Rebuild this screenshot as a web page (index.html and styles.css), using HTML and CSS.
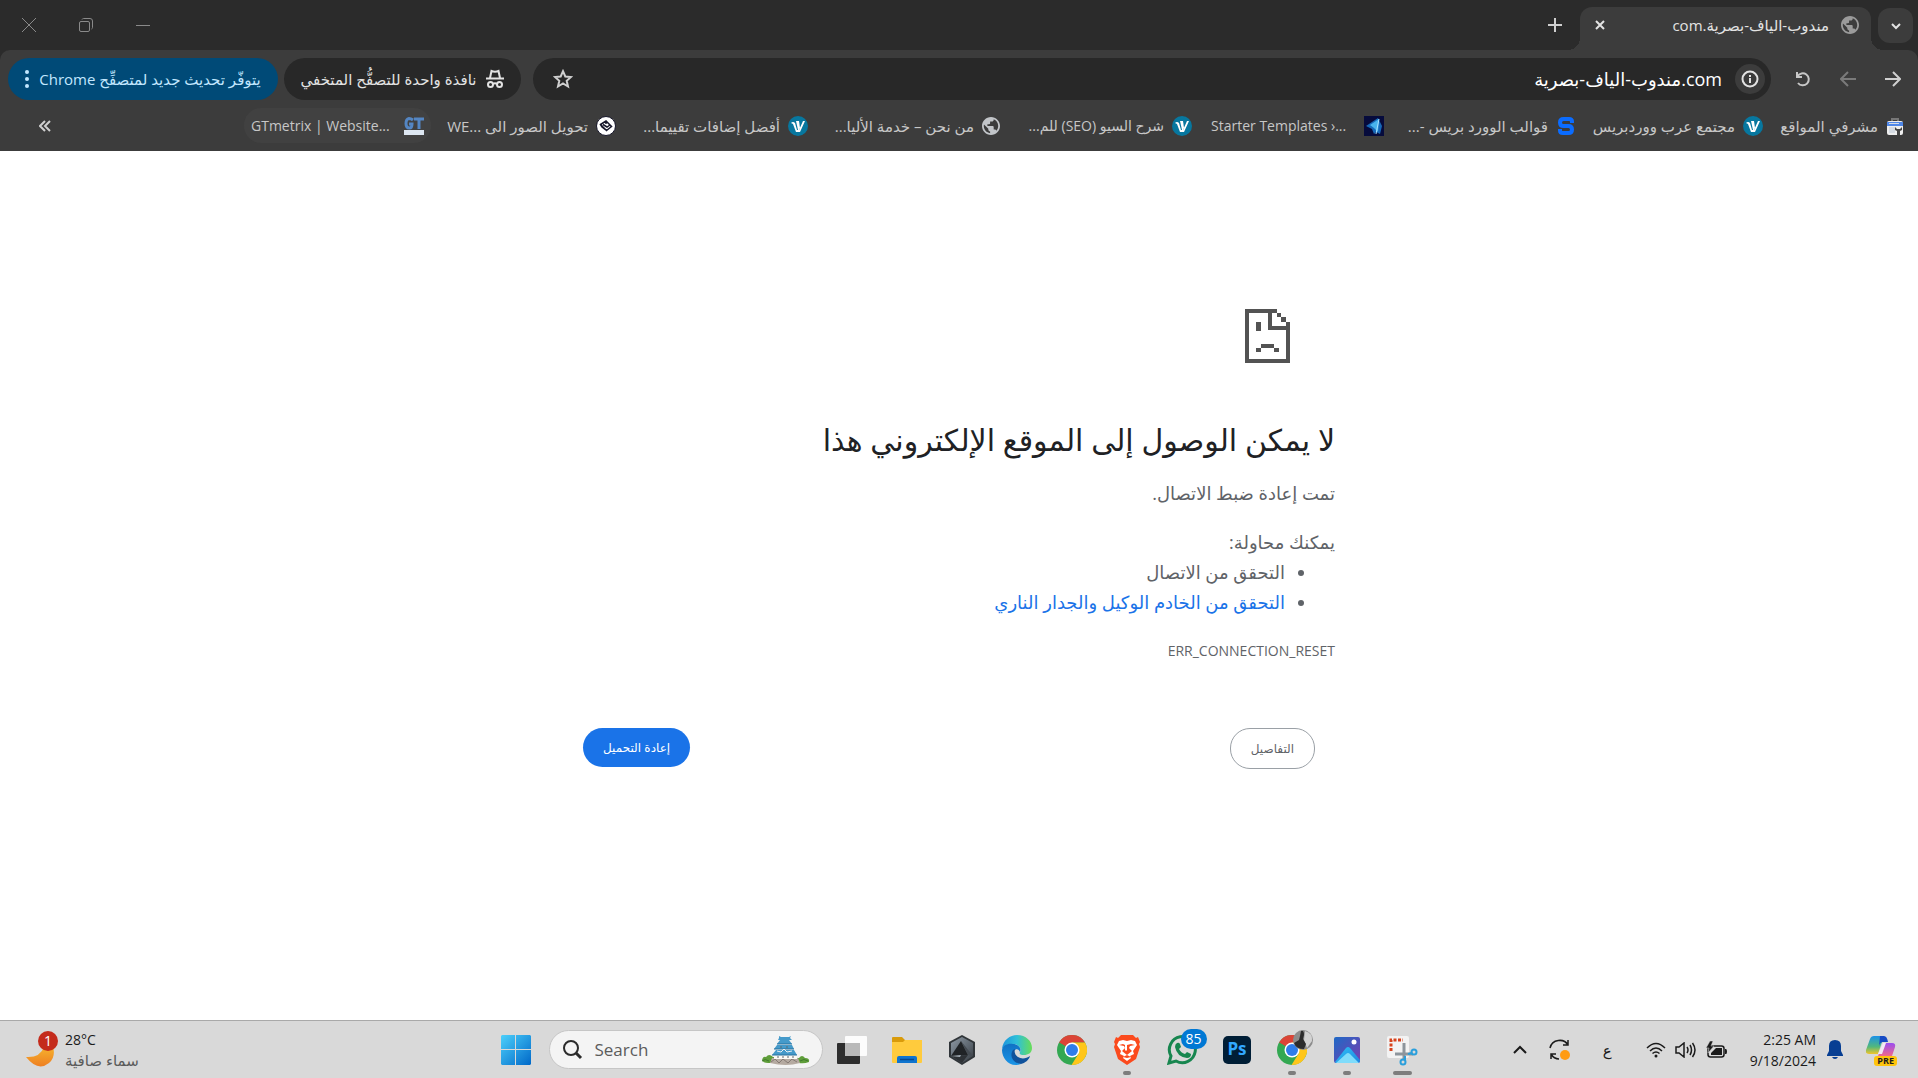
FILE: index.html
```html
<!DOCTYPE html>
<html lang="ar" dir="rtl">
<head>
    <meta charset="utf-8">
    <title>مندوب-الياف-بصرية.com</title>
    <link rel="stylesheet" href="styles.css">
</head>
<body>
    <svg class="defs" width="0" height="0" aria-hidden="true">
        <defs>
            <symbol id="globe" viewBox="2 2 20 20">
                <path fill="currentColor" d="M12 2C6.480 2 2 6.480 2 12s4.480 10 10 10 10-4.480 10-10S17.520 2 12 2zm-1 17.930c-3.950-.490-7-3.850-7-7.930 0-.620.080-1.210.210-1.790L9 15v1c0 1.100.900 2 2 2v1.930zm6.900-2.540c-.260-.810-1-1.390-1.900-1.390h-1v-3c0-.550-.450-1-1-1H8v-2h2c.550 0 1-.450 1-1V7h2c1.100 0 2-.900 2-2v-.410c2.930 1.190 5 4.060 5 7.410 0 2.080-.800 3.970-2.100 5.390z"/>
            </symbol>
            <symbol id="arabwp" viewBox="0 0 20 20">
                <circle cx="10" cy="10" r="10" fill="#07779f"/>
                <path d="M3 7q2-2 4 0l2 7h2l4-9h2l-5 11H8L5 8z" fill="#fff"/>
                <path d="M8 5h3l1 7-1 2h-1z" fill="#fff"/>
            </symbol>
            <symbol id="chrome" viewBox="0 0 30 30">
                <circle cx="15" cy="15" r="15" fill="#33a852"/>
                <path d="M15 15L2 7.500A15 15 0 0 1 28 7.500H15z" fill="#db4437"/>
                <path d="M15 7.500H28A15 15 0 0 1 14.500 30L21.500 18.700z" fill="#ffc61a"/>
                <path d="M2 7.500L8.500 18.700 15 15z" fill="#33a852"/>
                <circle cx="15" cy="15" r="7.500" fill="#fff"/>
                <circle cx="15" cy="15" r="6" fill="#2f7de9"/>
            </symbol>
        </defs>
    </svg>

    <header class="browser">
        <div class="tabstrip">
            <button class="tab-search" aria-label="البحث في علامات التبويب">
                <svg width="12" height="12" viewBox="0 0 12 12" fill="none" stroke="#e3e3e3" stroke-width="2"><path d="M2 4l4 4 4-4"/></svg>
            </button>
            <div class="tab">
                <svg class="tab-icon" width="18" height="18"><use href="#globe"/></svg>
                <span class="tab-title">مندوب-الياف-بصرية.com</span>
                <button class="tab-close" aria-label="إغلاق">
                    <svg width="12" height="12" viewBox="0 0 12 12" stroke="#e3e3e3" stroke-width="2"><path d="M2 2l8 8M10 2l-8 8"/></svg>
                </button>
            </div>
            <button class="new-tab" aria-label="علامة تبويب جديدة">
                <svg width="14" height="14" viewBox="0 0 14 14" stroke="#d0d0d0" stroke-width="2"><path d="M7 0v14M0 7h14"/></svg>
            </button>
            <div class="window-buttons">
                <button aria-label="تصغير"><svg width="14" height="14" viewBox="0 0 14 14" stroke="#8a8a8a"><path d="M0 7.500h14"/></svg></button>
                <button aria-label="استعادة"><svg width="14" height="14" viewBox="0 0 14 14" fill="none" stroke="#8a8a8a"><rect x=".5" y="3.500" width="10" height="10" rx="1.500"/><path d="M3 1.500q.5-1 1.500-1H11q2.500 0 2.500 2.500v6.500q0 1-1 1.500"/></svg></button>
                <button aria-label="إغلاق النافذة"><svg width="14" height="14" viewBox="0 0 14 14" stroke="#8a8a8a"><path d="M0 0l14 14M14 0L0 14"/></svg></button>
            </div>
        </div>

        <div class="toolbar">
            <nav class="nav-buttons">
                <button aria-label="رجوع"><svg width="16" height="16" viewBox="0 0 16 16" fill="none" stroke="#d0d0d0" stroke-width="2"><path d="M0 8h14M8 1l7 7-7 7"/></svg></button>
                <button aria-label="تقدم"><svg width="16" height="16" viewBox="0 0 16 16" fill="none" stroke="#7a7a7a" stroke-width="2"><path d="M16 8H2M8 1L1 8l7 7"/></svg></button>
                <button aria-label="إعادة التحميل"><svg width="18" height="18" viewBox="0 0 18 18" fill="none" stroke="#c7c7c7" stroke-width="2"><path d="M3 2v5h5M3.500 6.500A6 6 0 1 1 4 13"/></svg></button>
            </nav>
            <div class="omnibox">
                <button class="site-info" aria-label="معلومات الموقع">
                    <svg width="18" height="18" viewBox="0 0 18 18" fill="none" stroke="#e3e3e3" stroke-width="2"><circle cx="9" cy="9" r="7.500"/><path d="M9 8v5M9 5v2"/></svg>
                </button>
                <input class="url" type="text" aria-label="شريط العناوين" value="com.مندوب-الياف-بصرية">
                <button class="star" aria-label="إضافة إشارة">
                    <svg width="20" height="20" viewBox="0 0 20 20" fill="none" stroke="#d0d0d0" stroke-width="2"><path d="M10 2.200l2.300 5.300 5.700.5-4.300 3.800 1.300 5.700-5-3-5 3 1.300-5.700L2 8l5.700-.5z"/></svg>
                </button>
            </div>
            <button class="pill incognito">
                <svg width="18" height="20" viewBox="0 0 18 20" fill="none" stroke="#e3e3e3" stroke-width="2"><path d="M0 9.500h18M4 9l1.500-7q3.500 1.500 7 0L14 9M7 15q2-1.500 4 0"/><circle cx="4.500" cy="15.500" r="2.500"/><circle cx="13.500" cy="15.500" r="2.500"/></svg>
                <span>نافذة واحدة للتصفُّح المتخفي</span>
            </button>
            <button class="pill update">
                <span>يتوفّر تحديث جديد لمتصفِّح Chrome</span>
                <svg width="4" height="18" viewBox="0 0 4 18" fill="#c2e7ff"><circle cx="2" cy="2" r="2"/><circle cx="2" cy="9" r="2"/><circle cx="2" cy="16" r="2"/></svg>
            </button>
        </div>

        <nav class="bookmarks">
            <a class="bookmark short" href="#">
                <svg width="18" height="18" viewBox="0 0 18 18"><path d="M6 4V2h6v2" fill="none" stroke="#777" stroke-width="2"/><rect x="1" y="4" width="16" height="14" rx="2" fill="#eee"/><path d="M1 5h16v4H1z" fill="#4f87e8"/><path d="M3 6h10v1H3zM3 10h6v6H3z" fill="#d5dbe3"/><path d="M9 10v3l2 1v4h3v-4l2-1v-3l-2 2h-3z" fill="#444"/></svg>
                <span>مشرفي المواقع</span>
            </a>
            <a class="bookmark medium" href="#"><svg width="20" height="20"><use href="#arabwp"/></svg><span>مجتمع عرب ووردبريس</span></a>
            <a class="bookmark" href="#">
                <svg width="20" height="20" viewBox="0 0 20 20" fill="none" stroke="#0b6cff" stroke-width="4"><path d="M16 7V5.500Q16 3 13 3H7.500Q4 3 4 6.500T7.500 10h5q3.500 0 3.500 3.500T12.500 17H7q-3 0-3-2.500V13"/></svg>
                <span>قوالب الوورد بريس -...</span>
            </a>
            <a class="bookmark latin" href="#">
                <svg width="20" height="20" viewBox="0 0 20 20"><rect width="20" height="20" fill="#060b3c"/><path d="M2 10L14 2l4 8-2 8-4-2-2 2-2-5z" fill="#1668b8"/><path d="M6 9l9-6-1 13-4-4z" fill="#48b4ee"/><path d="M15 3l-3 15" stroke="#a8e0ff"/></svg>
                <span dir="ltr">Starter Templates ›...</span>
            </a>
            <a class="bookmark latin" href="#"><svg width="20" height="20"><use href="#arabwp"/></svg><span>شرح السيو (SEO) للم...</span></a>
            <a class="bookmark" href="#"><svg class="grey" width="18" height="18"><use href="#globe"/></svg><span>من نحن – خدمة الأليا...</span></a>
            <a class="bookmark" href="#"><svg width="20" height="20"><use href="#arabwp"/></svg><span>أفضل إضافات تقييما...</span></a>
            <a class="bookmark" href="#">
                <svg width="20" height="20" viewBox="0 0 20 20"><circle cx="10" cy="10" r="9.500" fill="#fff" stroke="#17172b"/><path d="M4.500 8.500L10 5l5.500 5.500-5 4zM4.500 8.500L6 11l4.500 3.500M7 8.500l4 2.500 3-2M10 5v3" fill="none" stroke="#17172b" stroke-width="1.500"/></svg>
                <span>تحويل الصور الى <bdi dir="ltr">WE...</bdi></span>
            </a>
            <a class="bookmark latin hovered" href="#">
                <svg width="20" height="18" viewBox="0 0 20 18"><g fill="none" stroke="#5486c3" stroke-width="3"><path d="M9 3Q7 1.500 5 1.500 2 2 2 6.500T5.500 11Q8 11 8 7H5M10 2h10M15 2v10"/></g><path d="M0 13h20v5H0z" fill="#dde6f1"/></svg>
                <span dir="ltr">GTmetrix | Website...</span>
            </a>
            <button class="more-bookmarks" aria-label="مزيد من الإشارات">
                <svg width="12" height="12" viewBox="0 0 12 12" fill="none" stroke="#d0d0d0" stroke-width="2"><path d="M6 1L1 6l5 5M11 1L6 6l5 5"/></svg>
            </button>
        </nav>
    </header>

    <main class="page">
        <div class="error">
            <svg class="sad" width="45" height="54" viewBox="0 0 45 54" fill="#535353" shape-rendering="crispEdges">
                <path d="M0 0h32v4h4v4h5v5h4v41H0zM4 4v46h37V21H23V4zM27 4v13h14v-4h-5V8h-4V4z" fill-rule="evenodd"/>
                <path d="M11 13h5v9h-5zM16 35h13v4H16zM11 39h5v4h-5zM29 39h5v4h-5z"/>
            </svg>
            <h1>لا يمكن الوصول إلى الموقع الإلكتروني هذا</h1>
            <p>تمت إعادة ضبط الاتصال.</p>
            <div class="suggestions">
                <p>يمكنك محاولة:</p>
                <ul>
                    <li>التحقق من الاتصال</li>
                    <li><a href="#">التحقق من الخادم الوكيل والجدار الناري</a></li>
                </ul>
            </div>
            <div class="error-code">ERR_CONNECTION_RESET</div>
            <div class="buttons">
                <button class="details">التفاصيل</button>
                <button class="reload">إعادة التحميل</button>
            </div>
        </div>
    </main>

    <footer class="taskbar" dir="ltr">
        <button class="weather">
            <svg width="34" height="38" viewBox="0 0 34 38">
                <defs><linearGradient id="moon" x2="0" y2="1"><stop stop-color="#f6b52e"/><stop offset="1" stop-color="#ee7f22"/></linearGradient></defs>
                <path d="M0 26q14 1 18-10l9-1q3 11-4 17-11 9-23-6z" fill="url(#moon)"/>
                <circle cx="22" cy="10" r="10" fill="#c42b1c"/>
                <text x="22" y="15" text-anchor="middle" font-size="14" fill="#fff">1</text>
            </svg>
            <span class="weather-text"><span>28°C</span><span class="sky" dir="rtl">سماء صافية</span></span>
        </button>

        <div class="apps">
            <button class="app" aria-label="Start">
                <svg width="30" height="30" viewBox="0 0 30 30">
                    <defs><linearGradient id="win" x2="1" y2="1"><stop stop-color="#4cd0fb"/><stop offset="1" stop-color="#0068c8"/></linearGradient></defs>
                    <path d="M1 0h13v14H0V1zM15 0h14l1 1v13H15zM0 15h14v15H1l-1-1zM15 15h15v14l-1 1H15z" fill="url(#win)"/>
                </svg>
            </button>
            <label class="search">
                <svg width="20" height="20" viewBox="0 0 20 20" fill="none" stroke="#2b2b2b" stroke-width="2"><circle cx="8" cy="8" r="7"/><path d="M13 13l5 5" stroke-width="3"/></svg>
                <input type="text" placeholder="Search" aria-label="Search">
                <svg width="48" height="30" viewBox="0 0 48 30">
                    <path d="M0 25q1-4 4-3 3-4 7 0l26 1q3-4 6 0 5 0 4 4-5 2-10 1H6q-5 0-6-3z" fill="#5f9e3a"/>
                    <path d="M0 26q3-3 7 0M38 26q4-3 8 0" fill="none" stroke="#3f7a2c"/>
                    <path d="M10 23h26l2 5q-14 4-30 0z" fill="#b5aaa1"/>
                    <path d="M9 27l4-3 4 4 4-4 5 4 4-4 5 3" stroke="#857a74" fill="none"/>
                    <path d="M12 19h23v5H12zM14 13h17v4H14zM16 9h13v3H16zM18 4h9v2h-9z" fill="#fbf9f4"/>
                    <path d="M17 1l2 1h8l2-1-1 2 2 2H16l1-2zM18 5h9l3 4H15zM15 10h15l2 4H12zM14 15h18l3 5H10z" fill="#459aca"/>
                    <path d="M15 9h15M12 14h20M10 20h25" stroke="#27709f"/>
                    <path d="M15 16l4 1 3-3 3 3 5-1" stroke="#e8f1f5" fill="none"/>
                    <path d="M15 22h2M20 22h2M25 22h2M30 22h2M18 12h2M24 12h2" stroke="#5d6870"/>
                </svg>
            </label>
            <button class="app" aria-label="Task view">
                <svg width="30" height="30" viewBox="0 0 30 30"><rect x="0" y="8" width="23" height="21" rx="1" fill="#2d2d2d"/><rect x="8" y="1" width="22" height="20" rx="1" fill="#fff" fill-opacity=".9"/><path d="M8 8h15v13H8z" fill="#b9b9b9"/></svg>
            </button>
            <button class="app" aria-label="File Explorer">
                <svg width="30" height="28" viewBox="0 0 30 28"><path d="M0 2q0-1 1-1h9l3 3h16q1 0 1 1v6H0z" fill="#d99b0b"/><path d="M0 6h11l2-2h17v22q0 1-1 1H1q-1 0-1-1z" fill="#ffcb3d"/><path d="M5 27v-5q0-2 2-2h16q2 0 2 2v5z" fill="#0f74cf"/><path d="M8 23.500h14" stroke="#07488f" stroke-width="1.500"/></svg>
            </button>
            <button class="app" aria-label="Editor">
                <svg width="28" height="30" viewBox="0 0 28 30">
                    <defs><linearGradient id="hex" x2="1" y2="1"><stop stop-color="#8d98a3"/><stop offset=".6" stop-color="#5b646d"/><stop offset="1" stop-color="#34393e"/></linearGradient></defs>
                    <path d="M14 0l13 7v15l-13 8-13-8V7z" fill="#303539"/>
                    <path d="M14 2l11 6v13l-11 7-11-7V8z" fill="url(#hex)"/>
                    <path d="M3 21L13 6l7 14-10 1z" fill="#202326"/>
                    <path d="M13 6l12 15-5-1z" fill="#444b52"/>
                    <path d="M3 21l7 0 10-1-6 8z" fill="#2d3135"/>
                    <path d="M3 21l10-1-1 2z" fill="#a5afb8"/>
                </svg>
            </button>
            <button class="app" aria-label="Edge">
                <svg width="30" height="30" viewBox="0 0 30 30">
                    <defs>
                        <linearGradient id="edge-a"><stop stop-color="#1d93dd"/><stop offset=".5" stop-color="#2fc0d8"/><stop offset="1" stop-color="#68dd57"/></linearGradient>
                        <linearGradient id="edge-b" x2="0" y2="1"><stop stop-color="#1071c4"/><stop offset="1" stop-color="#1b94e6"/></linearGradient>
                    </defs>
                    <path d="M0 14C1 5 8 0 15 0c9 0 15 6 15 13 0 5-4 7-8 7s-5-1-4-3c2-3-1-8-7-8-5 0-9 2-11 5z" fill="url(#edge-a)"/>
                    <path d="M0 15c1-5 6-7 11-6 5 0 9 4 7 8-1-3-4-4-6-1-2 4 0 10 7 13C8 33 0 24 0 15z" fill="url(#edge-b)"/>
                    <path d="M11 15c-4 6 0 13 8 14 4-1 8-4 9-8-4 3-9 3-12 1-3-2-4-5-3-8z" fill="#10529c"/>
                </svg>
            </button>
            <button class="app" aria-label="Chrome"><svg width="30" height="30"><use href="#chrome"/></svg></button>
            <button class="app running" aria-label="Brave">
                <svg width="26" height="30" viewBox="0 0 26 30"><path d="M7 0h12l3 3 2-1 2 5-1 2 1 3-4 12-9 6-9-6L0 12l1-3-1-2 2-5 2 1z" fill="#fb4a1d"/><path d="M9 5l4 1 4-1 4 1 2 4-4 6 1 3-4 2 1 2-4 3-4-3 1-2-4-2 1-3-4-6 2-4z" fill="#fff"/><path d="M5 10l5 1 1 2-3 3 5 4 5-4-3-3 1-2 5-1-4-1-4 1v5l-1 1-1-1v-5L9 9zM9 22l4-2 4 2-4 1z" fill="#fb4a1d"/></svg>
            </button>
            <button class="app" aria-label="WhatsApp">
                <svg width="30" height="30" viewBox="0 0 30 30"><path d="M2 28l2-7A13 13 0 1 1 9 26z" fill="none" stroke="#17864f" stroke-width="3"/><path d="M10 8q2-1 3 1l1 3-2 2q2 4 6 5l2-2 4 2q0 4-4 4-10-1-12-11 0-3 2-4z" fill="#17864f"/></svg>
                <span class="badge">85</span>
            </button>
            <button class="app" aria-label="Photoshop"><span class="ps">Ps</span></button>
            <button class="app running" aria-label="Chrome profile">
                <svg width="30" height="30"><use href="#chrome"/></svg>
                <svg class="avatar" width="22" height="22" viewBox="0 0 22 22"><circle cx="11" cy="11" r="10" fill="#8c8c8c"/><path d="M13 2q8 2 7 10l-5 7-3-8z" fill="#d2d2d2"/><path d="M9 2q3-1 3 4l-1 4 3 5-2 5q-8 0-10-6l5-3 1-4z" fill="#2c2c2c"/></svg>
            </button>
            <button class="app running" aria-label="Photos">
                <svg width="26" height="26" viewBox="0 0 26 26">
                    <defs>
                        <linearGradient id="photo" x2="1" y2="1"><stop stop-color="#1e69c6"/><stop offset="1" stop-color="#7a3fb0"/></linearGradient>
                        <linearGradient id="hill" x2="1" y2="1"><stop stop-color="#2fc3f7"/><stop offset="1" stop-color="#1c86e0"/></linearGradient>
                    </defs>
                    <rect width="26" height="26" rx="2" fill="url(#photo)"/><path d="M1 25l11-14q2-2 4 0l10 12q0 3-2 3H2z" fill="url(#hill)"/><path d="M2 26l10-9q2-2 4 0l9 9z" fill="#7fdcfb"/><circle cx="20" cy="5" r="2.500" fill="#fff"/>
                </svg>
            </button>
            <button class="app running active" aria-label="Snipping Tool">
                <svg width="32" height="32" viewBox="0 0 32 32"><rect x="1" y="2" width="22" height="22" rx="2" fill="#f3f3f3"/><path d="M5 17V6h12" fill="none" stroke="#d8431c" stroke-width="3" stroke-dasharray="3 1.500"/><path d="M18 9v17M9 20h18" stroke="#8d959c" stroke-width="3"/><g fill="none" stroke="#2a9fdc" stroke-width="2"><circle cx="28" cy="18" r="2.500"/><circle cx="17" cy="28" r="2.500"/><path d="M19 26v-4M22 20l4-1"/></g></svg>
            </button>
        </div>

        <div class="tray">
            <button aria-label="Hidden icons"><svg width="14" height="10" viewBox="0 0 14 10" fill="none" stroke="#1b1b1b" stroke-width="2"><path d="M1 8l6-6 6 6"/></svg></button>
            <button class="sync" aria-label="Update"><svg width="22" height="22" viewBox="0 0 22 22" fill="none" stroke="#1b1b1b" stroke-width="1.500"><path d="M1 9C3 0 15-1 19 6M19 1v5h-5M2 20v-5h5M2 15q3 5 8 5"/><circle cx="16" cy="16" r="5" fill="#ff9b12" stroke="none"/></svg></button>
            <button class="lang" lang="ar">ع</button>
            <button class="status" aria-label="Network, sound and battery">
                <svg width="20" height="16" viewBox="0 0 20 16" fill="none" stroke="#1b1b1b" stroke-width="1.500"><path d="M1 6q9-9 18 0M4 9q6-6 12 0M6.500 11.500q3.500-3 7 0"/><circle cx="10" cy="14" r="1.500" fill="#1b1b1b" stroke="none"/></svg>
                <svg width="22" height="16" viewBox="0 0 22 16" fill="none" stroke="#1b1b1b" stroke-width="1.500"><path d="M1 5h3l5-4v14l-5-4H1zM12 5q2 3 0 6M15 3q3 5 0 10M17.500 1q5 7 0 14"/></svg>
                <svg width="22" height="18" viewBox="0 0 22 18"><rect x="2" y="5" width="16" height="11" rx="2.500" fill="none" stroke="#1b1b1b" stroke-width="1.500"/><path d="M5 14v-2l5-5h6v7zM19 8h1q1 0 1 2.500T20 13h-1z" fill="#1b1b1b"/><path d="M4 0L0 7h3l-1 5 6-7H5l2-5z" fill="#1b1b1b" stroke="#d9d9d9" stroke-width=".5"/></svg>
            </button>
            <button class="clock"><span>2:25 AM</span><span>9/18/2024</span></button>
            <button class="bell" aria-label="Notifications"><svg width="18" height="20" viewBox="0 0 18 20" fill="#073e93"><path d="M9 0q6 0 6 6v5l2 4v1H1v-1l2-4V6q0-6 6-6zM6 17h6q-1 2-3 2t-3-2z"/></svg></button>
            <button class="copilot" aria-label="Copilot">
                <svg width="30" height="30" viewBox="0 0 30 30">
                    <defs>
                        <linearGradient id="co-a" x2="0" y2="1"><stop stop-color="#1b92e8"/><stop offset=".6" stop-color="#52b87b"/><stop offset="1" stop-color="#f2c52a"/></linearGradient>
                        <linearGradient id="co-b" x2="0" y2="1"><stop stop-color="#9a4df0"/><stop offset="1" stop-color="#f0698b"/></linearGradient>
                    </defs>
                    <path d="M8 1h10l-6 18H3q-4 0-3-4L4 4q1-3 4-3z" fill="url(#co-a)"/><path d="M14 1h4q3 0 4 6h-5q-3 0-4 4z" fill="#164bc4"/><path d="M19 8h7q4 0 3 4l-3 9H12l4-9q1-4 3-4z" fill="url(#co-b)"/><path d="M17 8h3l-4 11h-4z" fill="#f3e9f5"/>
                </svg>
                <span class="pre">PRE</span>
            </button>
        </div>
    </footer>
</body>
</html>
```
FILE: styles.css
```css
* { box-sizing: border-box; }
body { margin: 0; min-height: 100vh; display: flex; flex-direction: column; background: #fff; font-family: "Open Sans", "Noto Sans", "DejaVu Sans", sans-serif; font-size: 14px; }
button { border: none; background: none; padding: 0; margin: 0; color: inherit; font-family: inherit; font-size: inherit; display: flex; align-items: center; justify-content: center; }
input { border: none; background: none; outline: none; padding: 0; min-width: 0; font-family: inherit; }
a { text-decoration: none; }
svg { flex: none; }
.defs { position: absolute; }

/* tab strip */
.browser { background: #2b2b2b; color: #e3e3e3; }
.tabstrip { display: flex; height: 50px; padding-right: 5px; }
.tab-search { width: 35px; height: 35px; margin-top: 8px; border-radius: 12px; background: #3c3c3c; }
.tab { position: relative; display: flex; align-items: center; width: 291px; margin: 7px 7px 0 9px; padding: 0 12px 7px 12px; background: #3c3c3c; border-radius: 12px 12px 0 0; }
.tab::before, .tab::after { content: ""; position: absolute; bottom: 0; width: 12px; height: 12px; }
.tab::before { right: -12px; background: radial-gradient(circle at 100% 0, transparent 12px, #3c3c3c 12px); }
.tab::after { left: -12px; background: radial-gradient(circle at 0 0, transparent 12px, #3c3c3c 12px); }
.tab-icon { color: #9b9b9b; }
.tab-title { flex: 1; padding-right: 12px; font-size: 15px; white-space: nowrap; }
.tab-close { width: 16px; height: 16px; }
.new-tab { width: 32px; height: 50px; }
.window-buttons { display: flex; margin-right: auto; }
.window-buttons button { width: 57px; height: 50px; }

/* toolbar */
.toolbar { display: flex; align-items: center; height: 58px; padding: 0 3px 0 8px; background: #3c3c3c; border-radius: 10px 10px 0 0; }
.nav-buttons { display: flex; margin-left: 9px; }
.nav-buttons button { width: 45px; height: 42px; }
.omnibox { flex: 1; display: flex; align-items: center; height: 42px; padding: 0 6px 0 20px; border-radius: 21px; background: #282828; }
.site-info { width: 30px; height: 30px; border-radius: 50%; background: #3c3c3c; }
.url { flex: 1; margin-right: 13px; color: #fff; font-size: 18px; }
.pill { height: 42px; border-radius: 21px; font-size: 15px; white-space: nowrap; gap: 10px; }
.incognito { width: 237px; margin-right: 12px; background: #282828; }
.update { width: 270px; margin-right: 6px; background: #004a77; color: #c2e7ff; }

/* bookmarks bar */
.bookmarks { display: flex; align-items: center; gap: 5px; height: 43px; padding: 0 7px 8px 39px; background: #3c3c3c; }
.bookmark { display: flex; align-items: center; gap: 8px; width: 187px; height: 35px; padding: 0 7px; border-radius: 17px; color: #c7c7c7; font-size: 15px; white-space: nowrap; }
.bookmark span { flex: 1; }
.latin { font-size: 14px; }
.short { width: 136px; }
.medium { width: 182px; }
.hovered { background: #414141; }
.grey { color: #c2c5c9; }
.more-bookmarks { margin-right: auto; }

/* error page */
.page { flex: 1; color: #5f6368; font-size: 18px; line-height: 30px; }
.error { max-width: 752px; margin: 158px auto 0; }
.sad { display: block; margin-right: 45px; }
h1 { margin: 55px 0 16px; color: #202124; font-size: 30px; font-weight: 500; line-height: 44px; }
p { margin: 0; }
.suggestions { margin-top: 19px; }
ul { margin: 0; padding: 0 50px 0 0; }
li a { color: #1a73e8; }
.error-code { margin-top: 19px; font-size: 14px; }
.buttons { display: flex; justify-content: space-between; align-items: flex-start; margin-top: 62px; padding-right: 20px; }
.buttons button { padding: 0 20px; border-radius: 20px; font-family: "Liberation Sans", "DejaVu Sans", sans-serif; font-size: 12px; }
.details { height: 41px; border: 1px solid #9aa0a6; }
.reload { height: 39px; background: #1a73e8; color: #fff; }

/* taskbar */
.taskbar { display: grid; grid-template-columns: 1fr auto 1fr; align-items: center; height: 58px; background: #d9d9d9; border-top: 1px solid #a9a9a9; color: #1b1b1b; }
.weather { justify-self: start; gap: 5px; padding-left: 26px; }
.weather-text { display: flex; flex-direction: column; align-items: flex-start; line-height: 21px; }
.sky { color: #5b5b5b; font-size: 15px; }
.apps { display: flex; align-items: center; }
.app { position: relative; width: 55px; height: 57px; }
.running::after { content: ""; position: absolute; bottom: 3px; width: 8px; height: 4px; border-radius: 2px; background: #7d7d7d; }
.active::after { width: 19px; }
.search { display: flex; align-items: center; gap: 12px; width: 274px; height: 39px; margin: 0 2px 0 5px; padding: 0 12px 0 13px; border: 1px solid #c6c6c6; border-radius: 20px; background: #f4f4f4; }
.search input { flex: 1; font-size: 17px; }
.search input::placeholder { color: #5c5c5c; opacity: 1; }
.badge { position: absolute; top: 8px; right: 3px; width: 26px; height: 20px; border-radius: 10px; background: #0078d4; color: #fff; font-size: 14px; line-height: 20px; }
.ps { width: 28px; height: 28px; border-radius: 5px; background: #001e36; color: #31a8ff; font-size: 17px; font-weight: 700; line-height: 25px; }
.avatar { position: absolute; top: 8px; right: 6px; }
.tray { display: flex; align-items: center; justify-content: flex-end; padding-right: 22px; }
.sync { margin-left: 22px; }
.lang { margin-left: 32px; font-size: 15px; }
.status { gap: 9px; margin-left: 34px; }
.clock { flex-direction: column; align-items: flex-end; margin-left: 22px; line-height: 21px; }
.bell { margin-left: 10px; }
.copilot { position: relative; margin-left: 22px; }
.pre { position: absolute; bottom: -1px; right: -1px; padding: 0 3px; border-radius: 3px; background: #ffc40c; color: #1b1b1b; font-size: 9px; font-weight: 700; line-height: 10px; }
```
